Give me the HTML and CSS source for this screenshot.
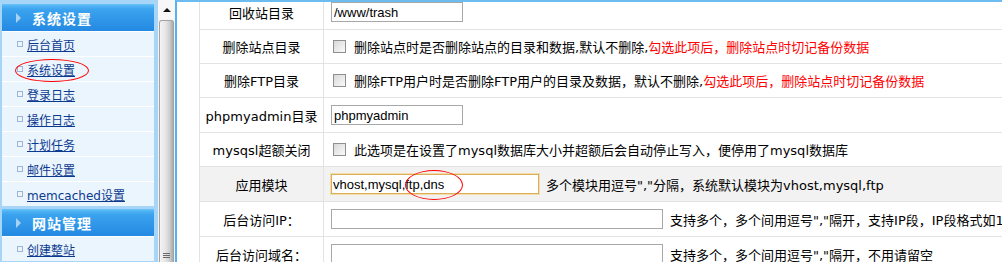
FILE: index.html
```html
<!DOCTYPE html>
<html lang="zh-CN">
<head>
    <meta charset="UTF-8">
    <title>系统设置</title>
    <link rel="stylesheet" href="styles.css">
</head>
<body>
    <div class="frame">
        <div class="left">
            <div class="menu">
                <div class="menu-head">系统设置</div>
                <a class="menu-item" href="#">后台首页</a>
                <a class="menu-item" href="#">系统设置</a>
                <a class="menu-item" href="#">登录日志</a>
                <a class="menu-item" href="#">操作日志</a>
                <a class="menu-item" href="#">计划任务</a>
                <a class="menu-item" href="#">邮件设置</a>
                <a class="menu-item" href="#">memcached设置</a>
                <div class="menu-head second">网站管理</div>
                <a class="menu-item" href="#">创建整站</a>
            </div>
            <div class="scrollbar">
                <div class="sb-up"></div>
                <div class="sb-thumb"><span class="grip"></span></div>
            </div>
        </div>

        <div class="main">
            <table class="form">
                <colgroup>
                    <col class="col-label">
                    <col>
                </colgroup>
                <tr>
                    <td class="label">回收站目录</td>
                    <td class="value"><div class="cell"><input class="txt w132" type="text" value="/www/trash"></div></td>
                </tr>
                <tr>
                    <td class="label">删除站点目录</td>
                    <td class="value"><div class="cell"><input class="chk" type="checkbox">删除站点时是否删除站点的目录和数据,默认不删除,<span class="red">勾选此项后，删除站点时切记备份数据</span></div></td>
                </tr>
                <tr>
                    <td class="label">删除FTP目录</td>
                    <td class="value"><div class="cell"><input class="chk" type="checkbox">删除FTP用户时是否删除FTP用户的目录及数据，默认不删除,<span class="red">勾选此项后，删除站点时切记备份数据</span></div></td>
                </tr>
                <tr>
                    <td class="label">phpmyadmin目录</td>
                    <td class="value"><div class="cell"><input class="txt w132" type="text" value="phpmyadmin"></div></td>
                </tr>
                <tr>
                    <td class="label">mysqsl超额关闭</td>
                    <td class="value"><div class="cell"><input class="chk" type="checkbox">此选项是在设置了mysql数据库大小并超额后会自动停止写入，便停用了mysql数据库</div></td>
                </tr>
                <tr class="grey">
                    <td class="label">应用模块</td>
                    <td class="value"><div class="cell"><input class="txt w208 focus" type="text" value="vhost,mysql,ftp,dns"><span class="tip">多个模块用逗号","分隔，系统默认模块为vhost,mysql,ftp</span></div></td>
                </tr>
                <tr>
                    <td class="label">后台访问IP：</td>
                    <td class="value"><div class="cell"><input class="txt w332" type="text"><span class="tip">支持多个，多个间用逗号","隔开，支持IP段，IP段格式如192.168.1.*</span></div></td>
                </tr>
                <tr>
                    <td class="label">后台访问域名：</td>
                    <td class="value"><div class="cell"><input class="txt w332" type="text"><span class="tip">支持多个，多个间用逗号","隔开，不用请留空</span></div></td>
                </tr>
            </table>
        </div>
    </div>

    <!-- red circles drawn on the screenshot -->
    <div class="mark mark-menu"></div>
    <div class="mark mark-input"></div>
</body>
</html>
```
FILE: styles.css
```css
body {
    margin: 0;
    font-family: "DejaVu Sans", "Noto Sans CJK SC", sans-serif;
    font-size: 13px;
    color: #000;
    overflow: hidden;
    position: relative;
}
.frame {
    display: flex;
    height: 262px;
}
.left {
    display: flex;
    flex-shrink: 0;
    width: 173px;
    padding-left: 2px;
    background: #a7d5f7;
}
.menu {
    width: 152px;
    padding-top: 4px;
}
.menu-head {
    display: flex;
    align-items: center;
    height: 27px;
    padding-left: 14px;
    background: linear-gradient(#6cc4f8 0, #4fb3f3 2px, #3aa2ee 6px, #2489e2 27px);
    color: #fff;
    font-size: 14px;
    font-weight: bold;
    letter-spacing: 1px;
}
.menu-head::before {
    content: "";
    border-left: 5px solid #a9d2f2;
    border-top: 5px solid transparent;
    border-bottom: 5px solid transparent;
    margin-right: 11px;
}
.menu-head.second {
    margin-top: 3px;
}
.menu-item {
    display: flex;
    align-items: center;
    height: 24px;
    padding-left: 15px;
    border-top: 1px solid #fff;
    background: #ebf5fe;
    color: #0b3a8e;
    font-size: 12px;
    text-decoration: underline;
}
.menu-item::before {
    content: "";
    width: 4px;
    height: 4px;
    border: 1px solid #9bb6d6;
    background: #eef4fb;
    margin-right: 4px;
}
.scrollbar {
    display: flex;
    flex-direction: column;
    width: 17px;
    margin-left: 4px;
    background: #f3f3f3;
}
.sb-up {
    height: 19px;
    display: flex;
    align-items: center;
    justify-content: center;
    background: #f7f7f7;
}
.sb-up::before {
    content: "";
    border-bottom: 4px solid #111;
    border-left: 4px solid transparent;
    border-right: 4px solid transparent;
}
.sb-thumb {
    flex: 1;
    display: flex;
    flex-direction: column;
    justify-content: flex-end;
    align-items: center;
    margin: 1px 1px 0;
    padding-bottom: 4px;
    border: 1px solid #a2a2a2;
    border-bottom: none;
    border-radius: 3px 3px 0 0;
    background: linear-gradient(90deg, #f4f4f4, #e4e4e4 45%, #cdcdcd 75%, #a9a9a9);
}
.grip {
    width: 7px;
    height: 5px;
    background: repeating-linear-gradient(#6a6a6a 0, #6a6a6a 1px, transparent 1px, transparent 2px);
}
.main {
    flex: 1;
    min-width: 0;
    overflow: hidden;
    background: #fff;
    border-left: 2px solid #58b0ee;
    border-top: 2px solid #6cbcf2;
    padding-left: 22px;
}
.form {
    width: 1100px;
    table-layout: fixed;
    border-spacing: 0;
    margin-top: -7px;
    white-space: nowrap;
}
.col-label {
    width: 125px;
}
.form td {
    border-bottom: 1px solid #e3e3e3;
}
.label {
    padding: 0;
    text-align: center;
    border-left: 1px solid #e3e3e3;
    border-right: 1px solid #e3e3e3;
}
.value {
    padding: 7px;
}
.cell {
    display: flex;
    align-items: center;
    min-height: 18px;
}
.grey td {
    background: #f2f2f2;
}
.red {
    color: #ff0000;
}
.txt {
    box-sizing: border-box;
    height: 20px;
    margin: 0;
    padding: 0 2px;
    border: 1px solid #a8a8a8;
    background: #fff;
    font-family: "Liberation Sans", sans-serif;
    font-size: 13px;
    color: #000;
}
.w132 { width: 132px; }
.w208 { width: 208px; }
.w332 { width: 332px; }
.txt.focus {
    padding-left: 1px;
    border-color: #dcae58;
    box-shadow: 0 0 0 1px #f4dca8;
}
.tip {
    margin-left: 7px;
}
.chk {
    appearance: none;
    -webkit-appearance: none;
    flex-shrink: 0;
    width: 13px;
    height: 13px;
    margin: 0 8px 0 2px;
    border: 1px solid #8e8f8f;
    background: linear-gradient(135deg, #d8d8d8, #fafafa);
}
.mark {
    position: absolute;
    border: 1px solid #ff0000;
    border-radius: 50%;
}
.mark-menu {
    left: 15px;
    top: 59px;
    width: 72px;
    height: 21px;
}
.mark-input {
    left: 405px;
    top: 170px;
    width: 56px;
    height: 28px;
}
```
